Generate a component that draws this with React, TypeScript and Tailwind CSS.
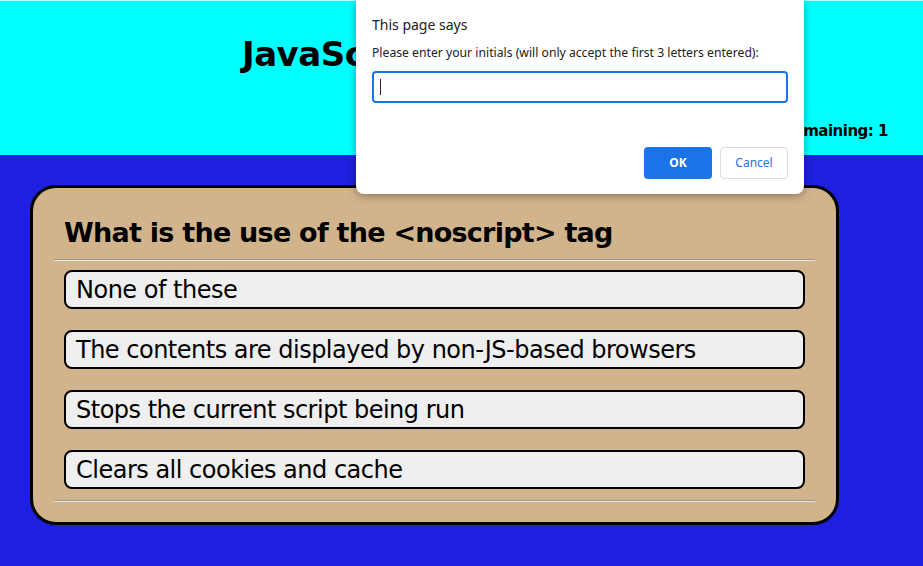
import React from "react";

// Quiz question with the browser prompt() dialog drawn over it.
const OPTIONS = [
  "None of these",
  "The contents are displayed by non-JS-based browsers",
  "Stops the current script being run",
  "Clears all cookies and cache",
];

function PromptDialog() {
  return (
    <div className="absolute left-[356px] top-0 flex w-[448px] flex-col rounded-b-[8px] bg-white px-4 pb-[15px] pt-[15px] font-['Noto_Sans',sans-serif] text-[#202124] shadow-[0_2px_8px_rgba(0,0,0,0.35)]">
      <p className="text-[14px] leading-[20px]">This page says</p>
      <p className="mt-[10px] text-[12.2px] leading-[16px]">
        Please enter your initials (will only accept the first 3 letters entered):
      </p>
      <div className="mt-[10px] flex h-[32px] items-center rounded-[4px] border-2 border-[#1a73e8] px-[6px]">
        <span className="h-[16px] w-px bg-[#202124]" />
      </div>
      <div className="mt-[44px] flex justify-end gap-2">
        <button className="h-[32px] w-[68px] rounded-[4px] bg-[#1a73e8] text-[12px] font-bold text-white">
          OK
        </button>
        <button className="h-[32px] w-[68px] rounded-[4px] border border-[#dadce0] bg-white text-[12px] text-[#1a73e8]">
          Cancel
        </button>
      </div>
    </div>
  );
}

export default function App() {
  return (
    <div className="relative min-h-[566px] bg-[#1f1fdf] font-['DejaVu_Sans',sans-serif] text-black">
      <header className="flex h-[155px] flex-col border-t border-[#b0ffff] bg-[#00ffff]">
        <h1 className="pl-[242px] pt-[33px] text-[34px] font-bold leading-[40px] tracking-[-0.5px]">
          JavaScript Quiz
        </h1>
        <p className="mt-auto pb-[14px] pr-[35px] text-right text-[15px] font-bold leading-[20px] tracking-[-0.5px]">
          Questions remaining: 1
        </p>
      </header>

      <main className="px-[30px] pt-[30px]">
        <div className="w-[809px] rounded-[26px] border-[3px] border-black bg-[#d2b48c] px-[21px] pb-[21px] pt-[29px]">
          <h2 className="pl-[10px] text-[27px] font-bold leading-[32px] tracking-[-0.75px]">
            What is the use of the &lt;noscript&gt; tag
          </h2>
          <hr className="mt-[10px] border-0 border-t border-[#9a968e] shadow-[0_1px_0_#ece6dc]" />
          <div className="mx-[10px] mt-[10px] flex flex-col gap-[21px]">
            {OPTIONS.map((opt) => (
              <button
                key={opt}
                className="flex h-[39px] items-center rounded-[8px] border-2 border-black bg-[#efefef] px-[10px] text-left text-[24px] tracking-[-0.5px]"
              >
                {opt}
              </button>
            ))}
          </div>
          <hr className="mt-[11px] border-0 border-t border-[#9a968e] shadow-[0_1px_0_#ece6dc]" />
        </div>
      </main>

      <PromptDialog />
    </div>
  );
}
